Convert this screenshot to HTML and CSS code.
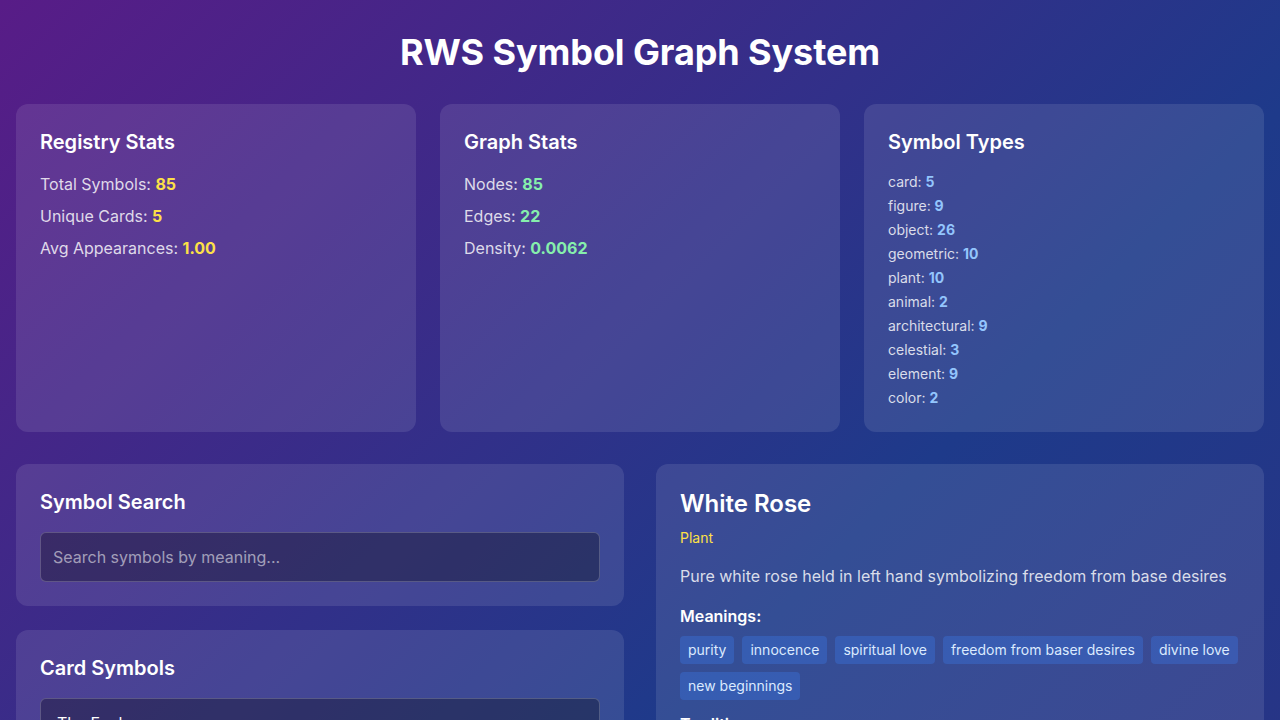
FILE: index.html
```html
<!DOCTYPE html>
<html lang="en">
<head>
<meta charset="utf-8">
<title>RWS Symbol Graph System</title>
<link rel="stylesheet" href="styles.css">
</head>
<body>
<div class="page">
  <h1 class="title">RWS Symbol Graph System</h1>

  <div class="stats-grid">
    <section class="card">
      <h2 class="card-title">Registry Stats</h2>
      <div class="stat-list">
        <p class="stat">Total Symbols: <span class="val-yellow">85</span></p>
        <p class="stat">Unique Cards: <span class="val-yellow">5</span></p>
        <p class="stat">Avg Appearances: <span class="val-yellow">1.00</span></p>
      </div>
    </section>
    <section class="card">
      <h2 class="card-title">Graph Stats</h2>
      <div class="stat-list">
        <p class="stat">Nodes: <span class="val-green">85</span></p>
        <p class="stat">Edges: <span class="val-green">22</span></p>
        <p class="stat">Density: <span class="val-green">0.0062</span></p>
      </div>
    </section>
    <section class="card">
      <h2 class="card-title">Symbol Types</h2>
      <div class="type-list">
        <p class="type">card: <span class="val-blue">5</span></p>
        <p class="type">figure: <span class="val-blue">9</span></p>
        <p class="type">object: <span class="val-blue">26</span></p>
        <p class="type">geometric: <span class="val-blue">10</span></p>
        <p class="type">plant: <span class="val-blue">10</span></p>
        <p class="type">animal: <span class="val-blue">2</span></p>
        <p class="type">architectural: <span class="val-blue">9</span></p>
        <p class="type">celestial: <span class="val-blue">3</span></p>
        <p class="type">element: <span class="val-blue">9</span></p>
        <p class="type">color: <span class="val-blue">2</span></p>
      </div>
    </section>
  </div>

  <div class="main-grid">
    <div class="left-col">
      <section class="card">
        <h2 class="card-title">Symbol Search</h2>
        <input class="field" type="text" placeholder="Search symbols by meaning...">
      </section>
      <section class="card">
        <h2 class="card-title">Card Symbols</h2>
        <select class="field select">
          <option>The Fool</option>
          <option>The Magician</option>
          <option>The High Priestess</option>
          <option>The Empress</option>
          <option>The Emperor</option>
        </select>
        <div class="symbol-list">
          <div class="symbol-item"><span class="sym-name">White Rose</span><span class="sym-type">plant</span></div>
          <div class="symbol-item"><span class="sym-name">Cliff Edge</span><span class="sym-type">geometric</span></div>
          <div class="symbol-item"><span class="sym-name">White Dog</span><span class="sym-type">animal</span></div>
          <div class="symbol-item"><span class="sym-name">Bindle</span><span class="sym-type">object</span></div>
          <div class="symbol-item"><span class="sym-name">Sun</span><span class="sym-type">celestial</span></div>
          <div class="symbol-item"><span class="sym-name">Mountains</span><span class="sym-type">element</span></div>
          <div class="symbol-item"><span class="sym-name">Yellow Sky</span><span class="sym-type">color</span></div>
        </div>
      </section>
    </div>

    <section class="card detail">
      <h2 class="detail-title">White Rose</h2>
      <p class="detail-type">Plant</p>
      <p class="detail-desc">Pure white rose held in left hand symbolizing freedom from base desires</p>
      <div class="detail-section">
        <h3 class="section-title">Meanings:</h3>
        <div class="tags">
          <span class="tag">purity</span>
          <span class="tag">innocence</span>
          <span class="tag">spiritual love</span>
          <span class="tag">freedom from baser desires</span>
          <span class="tag">divine love</span>
          <span class="tag">new beginnings</span>
        </div>
      </div>
      <div class="detail-section">
        <h3 class="section-title">Traditions:</h3>
        <div class="tags">
          <span class="tag tag-purple">rosicrucian</span>
          <span class="tag tag-purple">christian</span>
          <span class="tag tag-purple">alchemical</span>
        </div>
      </div>
      <div class="detail-section">
        <h3 class="section-title">Appears On:</h3>
        <div class="tags">
          <span class="tag tag-green">The Fool</span>
        </div>
      </div>
      <div class="detail-section">
        <h3 class="section-title">Related Symbols:</h3>
        <div class="symbol-list">
          <div class="symbol-item"><span class="sym-name">Red Rose</span><span class="sym-type">plant</span></div>
          <div class="symbol-item"><span class="sym-name">Lily</span><span class="sym-type">plant</span></div>
        </div>
      </div>
    </section>
  </div>
</div>
</body>
</html>
```

FILE: styles.css
```css
* { box-sizing: border-box; }

html, body { margin: 0; padding: 0; }

body {
  font-family: Inter, "Noto Sans", "Liberation Sans", sans-serif;
  color: #ffffff;
  background: linear-gradient(135deg, #581c87 0%, #1e3a8a 50%, #312e81 100%);
  min-height: 1500px;
}

.page {
  padding: 32px 16px 32px;
}

.title {
  margin: 0 0 32px;
  font-size: 36px;
  line-height: 40px;
  font-weight: 700;
  letter-spacing: -0.1px;
  text-align: center;
}

.stats-grid {
  display: grid;
  grid-template-columns: repeat(3, 1fr);
  gap: 24px;
  margin-bottom: 32px;
}

.card {
  background: rgba(255, 255, 255, 0.1);
  border-radius: 12px;
  padding: 24px;
}

.card-title {
  margin: 0 0 16px;
  font-size: 20px;
  line-height: 28px;
  font-weight: 600;
}

.stat-list {
  display: flex;
  flex-direction: column;
  gap: 8px;
}

.stat {
  margin: 0;
  font-size: 16px;
  line-height: 24px;
  color: rgba(255, 255, 255, 0.82);
}

.type-list {
  display: flex;
  flex-direction: column;
  gap: 4px;
}

.type {
  margin: 0;
  font-size: 14px;
  line-height: 20px;
  color: rgba(255, 255, 255, 0.82);
}

.val-yellow { color: #fde047; font-weight: 700; }
.val-green { color: #86efac; font-weight: 700; }
.val-blue { color: #93c5fd; font-weight: 700; }

.main-grid {
  display: grid;
  grid-template-columns: 1fr 1fr;
  gap: 32px;
  align-items: start;
}

.left-col {
  display: flex;
  flex-direction: column;
  gap: 24px;
}

.field {
  display: block;
  width: 100%;
  height: 50px;
  padding: 12px 12px;
  font-family: inherit;
  font-size: 16px;
  line-height: 24px;
  color: #ffffff;
  background: rgba(0, 0, 0, 0.3);
  border: 1px solid rgba(255, 255, 255, 0.2);
  border-radius: 6px;
  outline: none;
}

.field::placeholder {
  color: rgba(255, 255, 255, 0.55);
}

.select {
  padding: 12px;
  margin-bottom: 16px;
}

.select option {
  color: #111827;
}

.symbol-list {
  display: flex;
  flex-direction: column;
  gap: 8px;
}

.symbol-item {
  display: flex;
  justify-content: space-between;
  align-items: center;
  padding: 10px 12px;
  background: rgba(255, 255, 255, 0.05);
  border-radius: 6px;
  font-size: 14px;
  line-height: 20px;
}

.sym-name { font-weight: 500; }
.sym-type { color: #93c5fd; font-size: 12px; }

.detail-title {
  margin: 0 0 8px;
  font-size: 24px;
  line-height: 32px;
  font-weight: 600;
}

.detail-type {
  margin: 0 0 16px;
  font-size: 14px;
  line-height: 20px;
  color: #fde047;
}

.detail-desc {
  margin: 0 0 16px;
  font-size: 16px;
  line-height: 24px;
  color: rgba(255, 255, 255, 0.82);
}

.detail-section {
  margin-bottom: 12px;
}

.section-title {
  margin: 0 0 8px;
  font-size: 16px;
  line-height: 24px;
  font-weight: 600;
}

.tags {
  display: flex;
  flex-wrap: wrap;
  gap: 8px;
}

.tag {
  padding: 4px 8px;
  font-size: 14px;
  line-height: 20px;
  color: #dbeafe;
  background: rgba(59, 130, 246, 0.3);
  border-radius: 4px;
}

.tag-purple { background: rgba(168, 85, 247, 0.3); color: #f3e8ff; }
.tag-green { background: rgba(34, 197, 94, 0.3); color: #dcfce7; }
```
